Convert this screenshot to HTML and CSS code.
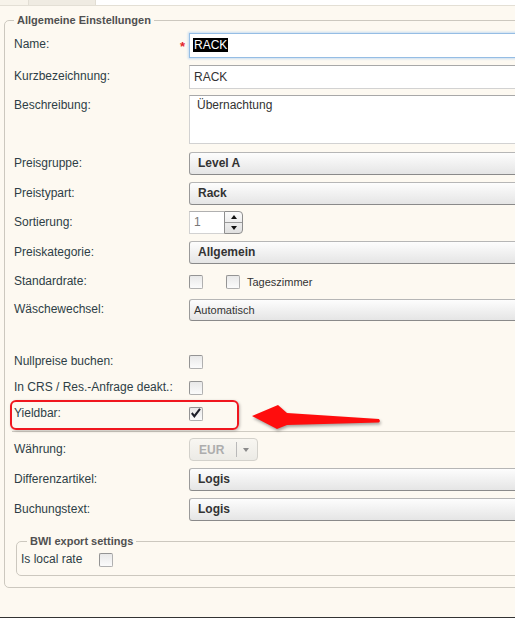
FILE: index.html
```html
<!DOCTYPE html>
<html lang="de">
<head>
<meta charset="utf-8">
<title>Rate</title>
<link rel="stylesheet" href="styles.css">
</head>
<body>
<div class="page">
  <div class="tabs">
    <div class="tab tab-a"></div>
    <div class="tab tab-b"></div>
    <div class="tab tab-rest"></div>
  </div>
  <fieldset class="group">
    <legend class="group-title">Allgemeine Einstellungen</legend>

    <div class="row mb7">
      <div class="lbl lbl-name">Name:<span class="req">*</span></div>
      <div class="input focus"><span class="sel">RACK</span></div>
    </div>

    <div class="row mb6">
      <div class="lbl">Kurzbezeichnung:</div>
      <div class="input">RACK</div>
    </div>

    <div class="row row-top mb8">
      <div class="lbl lbl-top">Beschreibung:</div>
      <div class="textarea">Übernachtung</div>
    </div>

    <div class="row mb7">
      <div class="lbl">Preisgruppe:</div>
      <div class="select">Level A</div>
    </div>

    <div class="row mb6">
      <div class="lbl">Preistypart:</div>
      <div class="select">Rack</div>
    </div>

    <div class="row mb7">
      <div class="lbl">Sortierung:</div>
      <div class="spin">
        <div class="spin-input">1</div>
        <div class="spin-btns">
          <div class="spin-up"><span class="tri-up"></span></div>
          <div class="spin-down"><span class="tri-down"></span></div>
        </div>
      </div>
    </div>

    <div class="row mb6">
      <div class="lbl">Preiskategorie:</div>
      <div class="select">Allgemein</div>
    </div>

    <div class="row row-23 mb6">
      <div class="lbl">Standardrate:</div>
      <div class="cb-group">
        <span class="cb"></span>
        <span class="cb cb-gap"></span>
        <span class="cb-text">Tageszimmer</span>
      </div>
    </div>

    <div class="row mb28">
      <div class="lbl">Wäschewechsel:</div>
      <div class="select small">Automatisch</div>
    </div>

    <div class="row row-26">
      <div class="lbl">Nullpreise buchen:</div>
      <div class="cb-group"><span class="cb"></span></div>
    </div>

    <div class="row row-26">
      <div class="lbl">In CRS / Res.-Anfrage deakt.:</div>
      <div class="cb-group"><span class="cb"></span></div>
    </div>

    <div class="row row-26 yield-row">
      <div class="lbl">Yieldbar:</div>
      <div class="cb-group">
        <span class="cb">
          <svg class="check" width="14" height="14" viewBox="0 0 14 14"><path d="M2 6.8 L3.6 5.3 L5.3 7.6 L10.2 1.2 L11.8 2.5 L5.4 11 Z" fill="#1d1f2a"/></svg>
        </span>
      </div>
      <div class="mark"></div>
      <svg class="arrow" width="136" height="36" viewBox="0 0 136 36">
        <polygon points="2,16 28,5 37,13 129,19 130,21 129,22.5 37,25 27,29" fill="#ff0d0d"/>
      </svg>
    </div>

    <div class="sep"></div>

    <div class="row mb7">
      <div class="lbl">Währung:</div>
      <div class="cur">
        <span class="cur-text">EUR</span>
        <span class="cur-div"></span>
        <span class="tri-down grey"></span>
      </div>
    </div>

    <div class="row mb7">
      <div class="lbl">Differenzartikel:</div>
      <div class="select">Logis</div>
    </div>

    <div class="row">
      <div class="lbl">Buchungstext:</div>
      <div class="select">Logis</div>
    </div>

    <fieldset class="bwi">
      <legend class="bwi-title">BWI export settings</legend>
      <div class="bwi-row">
        <span class="bwi-lbl">Is local rate</span>
        <span class="cb"></span>
      </div>
    </fieldset>
  </fieldset>
</div>
</body>
</html>
```

FILE: styles.css
```css
* { box-sizing: border-box; }
html, body { margin: 0; padding: 0; }
body {
  font-family: "Liberation Sans", Arial, sans-serif;
  font-size: 12px;
  color: #2e3e46;
  background: #fdf9f1;
  overflow: hidden;
}
.page {
  width: 515px;
  height: 618px;
  border-bottom: 1px solid #333;
  background: #fdf9f1;
  overflow: hidden;
}
.tabs {
  display: flex;
  height: 6px;
  border-bottom: 1px solid #e3dfd5;
}
.tab-a { width: 28px; background: #f7f3ea; }
.tab-b { width: 68px; background: #efebe2; border-left: 1px solid #e2ded4; border-right: 1px solid #e2ded4; }
.tab-rest { flex: 1; background: #fff; }

.group {
  margin: 8px 0 0 4px;
  width: 600px;
  min-width: 0;
  border: 1px solid #ccc8bf;
  border-radius: 5px;
  padding: 6px 0 11px 9px;
}
.group-title {
  font-size: 11px;
  font-weight: bold;
  color: #505050;
  line-height: 13px;
  padding: 0 3px;
}
.row {
  display: grid;
  grid-template-columns: 175px 1fr;
  align-items: center;
}
.row-top { align-items: start; }
.row-23 { min-height: 23px; }
.row-26 { min-height: 26px; }
.mb6 { margin-bottom: 6px; }
.mb7 { margin-bottom: 7px; }
.mb8 { margin-bottom: 8px; }
.mb28 { margin-bottom: 28px; }

.lbl {
  display: flex;
  justify-content: space-between;
  line-height: 14px;
  padding-bottom: 2px;
  white-space: nowrap;
}
.lbl-name { padding-bottom: 3px; }
.lbl-top { padding-top: 3px; }
.req {
  color: #e3262b;
  font-weight: bold;
  font-size: 13px;
  margin-right: 4px;
  padding-top: 5px;
  line-height: 10px;
}

.input {
  height: 24px;
  background: #fff;
  border: 1px solid #d2d2d2;
  border-top-color: #a8a8a8;
  padding: 0 4px;
  line-height: 22px;
  color: #333;
  white-space: nowrap;
}
.input.focus {
  height: 25px;
  border: 1px solid #95bde4;
  box-shadow: 0 0 2px 1px #c8ddf2;
  padding-left: 3px;
}
.sel {
  background: #000;
  color: #fff;
  padding: 0 1px;
}
.textarea {
  height: 49px;
  background: #fff;
  border: 1px solid #d2d2d2;
  border-top-color: #a8a8a8;
  padding: 2px 7px;
  line-height: 14px;
  color: #333;
}
.select {
  height: 23px;
  border: 1px solid #b6b6b6;
  border-bottom-color: #8a8a8a;
  border-left-color: #9a9a9a;
  border-radius: 3px;
  background: linear-gradient(#fdfdfd, #e5e5e5);
  padding-left: 8px;
  font-weight: bold;
  color: #333;
  line-height: 21px;
}
.select.small {
  height: 22px;
  font-weight: normal;
  font-size: 11px;
  padding-left: 4px;
  line-height: 20px;
}

.spin { display: flex; height: 23px; }
.spin-input {
  width: 35px;
  background: #fff;
  border: 1px solid #d2d2d2;
  border-top-color: #b0b0b0;
  border-right: none;
  padding-left: 4px;
  color: #777;
  line-height: 21px;
}
.spin-btns {
  width: 19px;
  display: flex;
  flex-direction: column;
  border: 1px solid #8e8e8e;
  border-radius: 0 4px 4px 0;
  background: linear-gradient(#fbfbfb, #e0e0e0);
}
.spin-up, .spin-down {
  flex: 1;
  display: flex;
  align-items: center;
  justify-content: center;
}
.spin-up { border-bottom: 1px solid #9a9a9a; }
.tri-up {
  width: 0; height: 0;
  border-left: 3.5px solid transparent;
  border-right: 3.5px solid transparent;
  border-bottom: 4px solid #111;
}
.tri-down {
  width: 0; height: 0;
  border-left: 3.5px solid transparent;
  border-right: 3.5px solid transparent;
  border-top: 4px solid #111;
}
.tri-down.grey { border-top-color: #8a8a8a; }

.cb-group { display: flex; align-items: center; }
.cb {
  display: inline-flex;
  width: 14px;
  height: 14px;
  border: 1px solid #949494;
  border-right-color: #b0b0b0;
  border-bottom-color: #b0b0b0;
  border-radius: 2px;
  background: linear-gradient(#e9e9e9, #fbfbfb);
  position: relative;
}
.cb-gap { margin-left: 23px; }
.cb-text { margin-left: 7px; font-size: 11px; color: #333; }
.check { position: absolute; left: -1px; top: -1px; }

.yield-row { position: relative; }
.mark {
  position: absolute;
  left: -4px;
  top: -1px;
  width: 229px;
  height: 30px;
  border: 2px solid #f0161e;
  border-radius: 6px;
  box-shadow: 1px 1px 3px rgba(0, 0, 0, 0.25);
}
.arrow {
  position: absolute;
  left: 236px;
  top: -1px;
  filter: drop-shadow(1px 2px 1.5px rgba(0, 0, 0, 0.35));
}

.sep {
  margin: 4px 0 6px -2px;
  border-top: 1px solid #cfcbc2;
}

.cur {
  width: 69px;
  height: 23px;
  display: flex;
  align-items: center;
  border: 1px solid #d3d1cb;
  border-radius: 4px;
  background: linear-gradient(#f8f6f1, #ecebe6);
}
.cur-text {
  margin-left: 9px;
  width: 37px;
  font-weight: bold;
  color: #adadad;
}
.cur-div {
  width: 1px;
  height: 15px;
  background: #b9b9b9;
  margin-right: 6px;
}

.bwi {
  margin: 14px 0 0 2px;
  min-width: 0;
  border: 1px solid #ccc8bf;
  border-radius: 5px;
  padding: 4px 0 7px 4px;
}
.bwi-title {
  margin-left: 6px;
  padding: 0 3px;
  font-size: 11px;
  font-weight: bold;
  line-height: 13px;
  color: #505050;
}
.bwi-row {
  display: flex;
  align-items: center;
  height: 16px;
}
.bwi-lbl { width: 78px; line-height: 14px; padding-bottom: 2px; }
```
